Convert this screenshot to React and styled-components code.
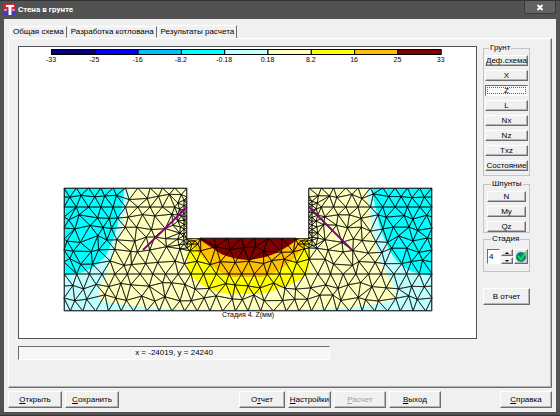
import React, { useState } from 'react';
import styled, { createGlobalStyle, css } from 'styled-components';

const GlobalStyle = createGlobalStyle`
  * {
    box-sizing: border-box;
  }
  body {
    margin: 0;
    font-family: 'Liberation Sans', Arial, sans-serif;
    font-size: 8px;
    line-height: 10px;
    color: #000;
  }
  button, input {
    font: inherit;
    color: inherit;
  }
`;

const raised = css`
  border: 1px solid;
  border-color: #fff #6c6c6c #6c6c6c #fff;
  box-shadow: inset -1px -1px 0 #b4b4b4;
`;

const sunken = css`
  border: 1px solid;
  border-color: #6c6c6c #fff #fff #6c6c6c;
`;

const Window = styled.div`
  display: flex;
  flex-direction: column;
  min-height: 100vh;
  padding: 0 4px 3px;
  background: #525252;
  border: solid #333;
  border-width: 1px 0 1px 0;
`;

const TitleBar = styled.header`
  display: flex;
  align-items: flex-start;
  height: 18px;
  gap: 3px;
`;

const TitleIcon = styled.svg`
  width: 11px;
  height: 11px;
  margin-top: 3px;
`;

const Title = styled.h1`
  flex: 1;
  margin: 3px 0 0;
  font-family: Roboto, sans-serif;
  font-size: 8px;
  line-height: 11px;
  font-weight: 700;
  color: #fff;
`;

const CloseBtn = styled.button`
  display: flex;
  align-items: center;
  justify-content: center;
  width: 32px;
  height: 13px;
  padding: 0;
  background: #626262;
  border: 1px solid #3a3a3a;
  border-top: 0;
  border-radius: 0 0 3px 3px;
`;

const Client = styled.main`
  flex: 1;
  display: flex;
  flex-direction: column;
  padding: 6px 4px 4px;
  background: #f0f0f0;
`;

const TabList = styled.div`
  display: flex;
  align-items: flex-end;
  padding-left: 2px;
`;

const Tab = styled.button`
  height: ${({ $active }) => ($active ? 14 : 12)}px;
  margin-right: ${({ $active }) => ($active ? 0 : 1)}px;
  margin-bottom: ${({ $active }) => ($active ? -1 : 0)}px;
  padding: 0 2px;
  background: #f0f0f0;
  border: 1px solid;
  border-color: #fff #6c6c6c transparent #fff;
  white-space: nowrap;
`;

const TabPage = styled.section`
  flex: 1;
  display: flex;
  gap: 6px;
  padding: 5px 21px 26px 9px;
  border: 1px solid;
  border-color: #fff #6c6c6c #6c6c6c #fff;
  box-shadow: inset -1px -1px 0 #b4b4b4;
`;

const PlotColumn = styled.div`
  flex: 1;
  min-width: 0;
  display: flex;
  flex-direction: column;
  gap: 7px;
  padding-top: 2px;
`;

const Plot = styled.svg`
  display: block;
  width: 100%;
  font-size: 7px;
  background: #fff;
  border: 1px solid #555;
`;

const Coords = styled.output`
  width: 68%;
  height: 14px;
  line-height: 12px;
  text-align: center;
  background: #f6f6f6;
  ${sunken}
`;

const Side = styled.aside`
  width: 47px;
  display: flex;
  flex-direction: column;
`;

const Group = styled.fieldset`
  min-width: 0;
  margin: 0 0 ${({ $gap }) => $gap}px;
  padding: ${({ $pad }) => $pad};
  border: 1px solid #c4c4c4;
`;

const Legend = styled.legend`
  margin-left: 4px;
  padding: 0 1px;
  line-height: 8px;
`;

const Stack = styled.div`
  display: grid;
  grid-template-columns: minmax(0, 1fr);
  gap: 4px;
`;

const Btn = styled.button`
  display: block;
  padding: 0;
  height: ${({ $small }) => ($small ? 11 : 17)}px;
  line-height: 8px;
  text-align: center;
  white-space: nowrap;
  background: #f0f0f0;
  ${raised}
  ${({ $pressed }) =>
    $pressed &&
    css`
      ${sunken}
      background: #f8f8f8;
      box-shadow: none;
      outline: 1px dotted #666;
      outline-offset: -3px;
    `}
  &:disabled {
    color: #a0a0a0;
  }
`;

const StageRow = styled.div`
  display: flex;
  align-items: center;
  gap: 1px;
`;

const StageInput = styled.input`
  width: 13px;
  height: 15px;
  padding: 0 1px;
  background: #fff;
  ${sunken}
`;

const Spin = styled.div`
  display: grid;
  gap: 1px;
  width: 12px;
`;

const SpinBtn = styled.button`
  display: flex;
  align-items: center;
  justify-content: center;
  height: 7px;
  padding: 0;
  background: #f0f0f0;
  ${raised}
`;

const ApplyBtn = styled.button`
  display: flex;
  width: 14px;
  height: 15px;
  padding: 0;
  background: #e4e4e4;
  ${raised}
`;

const Footer = styled.footer`
  display: grid;
  grid-template-columns: 54px 54px 15fr 46px 43px 52px 52px 7fr 52px;
  column-gap: 3px;
  padding-top: 3px;
`;

const Help = styled(Btn)`
  grid-column: 9;
`;

const Report = styled(Btn)`
  grid-column: 4;
`;

const scale = [
  ['-33', '#000080'],
  ['-25', '#0000ff'],
  ['-16', '#00bfff'],
  ['-8.2', '#00ffff'],
  ['-0.18', '#c0ffff'],
  ['0.18', '#ffffc0'],
  ['8.2', '#ffff00'],
  ['16', '#ffc000'],
  ['25', '#800000'],
  ['33', null],
];

// soil massif and the pit cut out of it
const soil = { left: 64, right: 432, top: 188, bottom: 311 };
const pit = { left: 187, right: 309, bottom: 238 };

const noise = (n) => {
  const s = Math.sin(n * 127.1 + 11.7) * 43758.5453;
  return s - Math.floor(s) - 0.5;
};

const meshPoints = () => {
  const pts = [];
  let seed = 1;
  const row = (y, from, to, step, jitter, shift) => {
    const n = Math.round((to - from) / step);
    const d = (to - from) / n;
    pts.push([from, y], [to, y]);
    for (let i = 1; i < n + (shift ? 1 : 0); i++) {
      const x = from + (i - (shift ? 0.5 : 0)) * d;
      pts.push([x + noise(seed++) * jitter, y + noise(seed++) * jitter]);
    }
  };
  const upper = [188, 197, 207, 217, 228];
  upper.forEach((y, i) => {
    const j = y === 188 || y === 207 ? 0 : 7;
    row(y, soil.left, pit.left, 12, j, i % 2);
    row(y, pit.right, soil.right, 12, j, i % 2);
  });
  row(239, soil.left, pit.left, 12, 7, true);
  row(238, pit.left, pit.right, 14, 0, false);
  row(239, pit.right, soil.right, 12, 7, true);
  [250, 262, 274, 286, 298, 311].forEach((y, i) => {
    row(y, soil.left, soil.right, 12.5, y === 274 || y === 311 ? 0 : 7, i % 2);
  });
  // refinement along both sheet piles
  [[pit.left, -1], [pit.right, 1]].forEach(([x, dir]) => {
    for (let y = 200; y <= 248; y += 4) {
      pts.push([x, y]);
    }
    for (let y = 201; y < 247; y += 4) {
      pts.push([x + dir * 3, y + noise(seed++) * 2]);
    }
    for (let y = 203; y < 247; y += 6) {
      pts.push([x + dir * (8 + noise(seed++) * 3), y]);
    }
    for (let i = 0; i < 4; i++) {
      pts.push([x - dir * (2 + i * 3), 241 + (i % 2) * 3]);
    }
  });
  return pts.filter(
    (p, i) => !pts.some((q, k) => k < i && Math.hypot(p[0] - q[0], p[1] - q[1]) < 2.2)
  );
};

// Bowyer-Watson triangulation
const triangulate = (points) => {
  const all = [...points, [-2000, -2000], [3000, -2000], [250, 4000]];
  const n = points.length;
  const make = (a, b, c) => {
    const [ax, ay] = all[a];
    const [bx, by] = all[b];
    const [cx, cy] = all[c];
    const d = 2 * (ax * (by - cy) + bx * (cy - ay) + cx * (ay - by));
    if (Math.abs(d) < 1e-6) return null;
    const a2 = ax * ax + ay * ay;
    const b2 = bx * bx + by * by;
    const c2 = cx * cx + cy * cy;
    const x = (a2 * (by - cy) + b2 * (cy - ay) + c2 * (ay - by)) / d;
    const y = (a2 * (cx - bx) + b2 * (ax - cx) + c2 * (bx - ax)) / d;
    return { v: [a, b, c], x, y, r: (ax - x) ** 2 + (ay - y) ** 2 };
  };
  let tris = [make(n, n + 1, n + 2)];
  for (let i = 0; i < n; i++) {
    const [px, py] = all[i];
    const edges = new Map();
    const keep = [];
    tris.forEach((t) => {
      if ((px - t.x) ** 2 + (py - t.y) ** 2 >= t.r) {
        keep.push(t);
        return;
      }
      [[0, 1], [1, 2], [2, 0]].forEach(([p, q]) => {
        const e = [t.v[p], t.v[q]].sort((a, b) => a - b);
        const key = e.join('-');
        if (edges.has(key)) edges.set(key, null);
        else edges.set(key, e);
      });
    });
    edges.forEach((e) => {
      const t = e && make(e[0], e[1], i);
      if (t) keep.push(t);
    });
    tris = keep;
  }
  return tris
    .filter((t) => t.v.every((k) => k < n))
    .map((t) => t.v.map((k) => all[k]))
    .filter((t) => {
      const x = (t[0][0] + t[1][0] + t[2][0]) / 3;
      const y = (t[0][1] + t[1][1] + t[2][1]) / 3;
      return !(x > pit.left && x < pit.right && y < pit.bottom);
    });
};

const meshPath = triangulate(
  // a tiny shear keeps collinear nodes from degenerating
  meshPoints().map(([x, y], i) => [x + noise(i) * 0.01, y + noise(i + 999) * 0.01])
)
  .map((t) => `M${t.map((p) => `${p[0].toFixed(1)} ${p[1].toFixed(1)}`).join('L')}Z`)
  .join('');

const StressPlot = () => (
  <Plot viewBox="19 47 457 291" role="img" aria-label="Стадия 4. Z(мм)">
    {scale.slice(0, 9).map(([label, color], i) => (
      <rect
        key={label}
        x={51.5 + i * 43.3}
        y="49.5"
        width="43.3"
        height="5"
        fill={color}
        stroke="#000"
        strokeWidth="1"
      />
    ))}
    {scale.map(([label], i) => (
      <text key={label} x={51 + i * 43.3} y="62" textAnchor="middle">
        {label}
      </text>
    ))}
    <path d="M64 188H187V238H309V188H432V311H64Z" fill="#ffffc0" />
    <path
      d="M64 188H129Q129 202 125 214Q121 234 115 247Q109 266 106 275Q99 287 98 296Q99 300 107 302Q140 308 187 309H309Q360 308 385 302Q397 300 397 296Q394 284 387 275Q380 262 377 250Q371 230 370 213Q369 200 366 188H432V311H64Z"
      fill="#c0ffff"
    />
    <path d="M64 188H124Q124 204 120 214Q115 240 105 257Q94 269 80 273L64 276Z" fill="#00ffff" />
    <path d="M432 188H372Q373 200 377 213Q379 228 385 240Q390 254 398 262Q405 269 413 272L432 276Z" fill="#00ffff" />
    <path d="M187 238V265Q187 272 192 277Q204 287 213 290Q222 294 232 294H257Q270 293 280 288Q296 283 303 277Q309 273 309 265V238Z" fill="#ffff00" />
    <path d="M188 238Q196 252 208 262Q218 273 233 277H262Q276 273 285 266Q303 254 307 238Z" fill="#ffc000" />
    <path d="M197 238Q211 247 221 254Q233 259 247 260Q264 259 276 253Q290 246 299 238Z" fill="#800000" />
    <path d={meshPath} fill="none" stroke="#000" strokeWidth="0.6" />
    <path
      d="M64.500 188.500H186.500V238.500H308.500V188.500H431.500V310.500H64.500Z"
      fill="none"
      stroke="#222"
      strokeWidth="0.8"
    />
    <path d="M187 207L143 250M309 207L352 250" stroke="#800080" strokeWidth="1.8" />
    <text x="248" y="317" textAnchor="middle">
      Стадия 4. Z(мм)
    </text>
  </Plot>
);

const tabs = ['Общая схема', 'Разработка котлована', 'Результаты расчета'];
const soilViews = ['Деф.схема', 'X', 'Z', 'L', 'Nx', 'Nz', 'Txz', 'Состояние'];
const pileViews = ['N', 'My', 'Qz'];

const App = () => {
  const [tab, setTab] = useState(tabs[2]);
  const [view, setView] = useState('Z');
  const [stage, setStage] = useState(4);

  return (
    <>
      <GlobalStyle />
      <Window>
        <TitleBar>
          <TitleIcon viewBox="0 0 11 11">
            <rect width="11" height="5" fill="#d22a3c" />
            <rect y="5" width="11" height="6" fill="#3c3cb4" />
            <path d="M0 5h3v2H0zM8 5h3v2H8z" fill="#e08ac0" />
            <path d="M2 1h8v2H7.500V11H4.500V3H2z" fill="#fff" />
          </TitleIcon>
          <Title>Стена в грунте</Title>
          <CloseBtn aria-label="Закрыть">
            <svg width="8" height="7" viewBox="0 0 8 7">
              <path d="M1.500 1L6.500 6M6.500 1L1.500 6" stroke="#fff" strokeWidth="1.8" />
            </svg>
          </CloseBtn>
        </TitleBar>
        <Client>
          <TabList role="tablist">
            {tabs.map((name) => (
              <Tab
                key={name}
                role="tab"
                aria-selected={tab === name}
                $active={tab === name}
                onClick={() => setTab(name)}
              >
                {name}
              </Tab>
            ))}
          </TabList>
          <TabPage>
            <PlotColumn>
              <StressPlot />
              <Coords>x = -24019, y = 24240</Coords>
            </PlotColumn>
            <Side>
              <Group $gap={4} $pad="3px 1px 4px">
                <Legend>Грунт</Legend>
                <Stack>
                  {soilViews.map((name) => (
                    <Btn
                      key={name}
                      $small
                      $pressed={view === name}
                      onClick={() => setView(name)}
                    >
                      {name}
                    </Btn>
                  ))}
                </Stack>
              </Group>
              <Group $gap={2} $pad="3px 3px 0">
                <Legend>Шпунты</Legend>
                <Stack>
                  {pileViews.map((name) => (
                    <Btn
                      key={name}
                      $small
                      $pressed={view === name}
                      onClick={() => setView(name)}
                    >
                      {name}
                    </Btn>
                  ))}
                </Stack>
              </Group>
              <Group $gap={16} $pad="6px 1px 7px 3px">
                <Legend>Стадия</Legend>
                <StageRow>
                  <StageInput
                    aria-label="Стадия"
                    value={stage}
                    onChange={(e) => setStage(e.target.value)}
                  />
                  <Spin>
                    <SpinBtn aria-label="Больше" onClick={() => setStage(Number(stage) + 1)}>
                      <svg width="4" height="2" viewBox="0 0 4 2">
                        <path d="M0 2L2 0L4 2Z" />
                      </svg>
                    </SpinBtn>
                    <SpinBtn aria-label="Меньше" onClick={() => setStage(Number(stage) - 1)}>
                      <svg width="4" height="2" viewBox="0 0 4 2">
                        <path d="M0 0L2 2L4 0Z" />
                      </svg>
                    </SpinBtn>
                  </Spin>
                  <ApplyBtn aria-label="Применить">
                    <svg width="12" height="13" viewBox="0 0 12 13">
                      <circle cx="6" cy="7" r="5" fill="#087c88" />
                      <path d="M3 6L6 9.500L11 2" fill="none" stroke="#14e632" strokeWidth="1.8" />
                    </svg>
                  </ApplyBtn>
                </StageRow>
              </Group>
              <Btn>В отчет</Btn>
            </Side>
          </TabPage>
          <Footer>
            <Btn>
              <u>О</u>ткрыть
            </Btn>
            <Btn>
              <u>С</u>охранить
            </Btn>
            <Report>
              О<u>т</u>чет
            </Report>
            <Btn>
              <u>Н</u>астройки
            </Btn>
            <Btn disabled>
              <u>Р</u>асчет
            </Btn>
            <Btn>
              <u>В</u>ыход
            </Btn>
            <Help>
              <u>С</u>правка
            </Help>
          </Footer>
        </Client>
      </Window>
    </>
  );
};

export default App;
